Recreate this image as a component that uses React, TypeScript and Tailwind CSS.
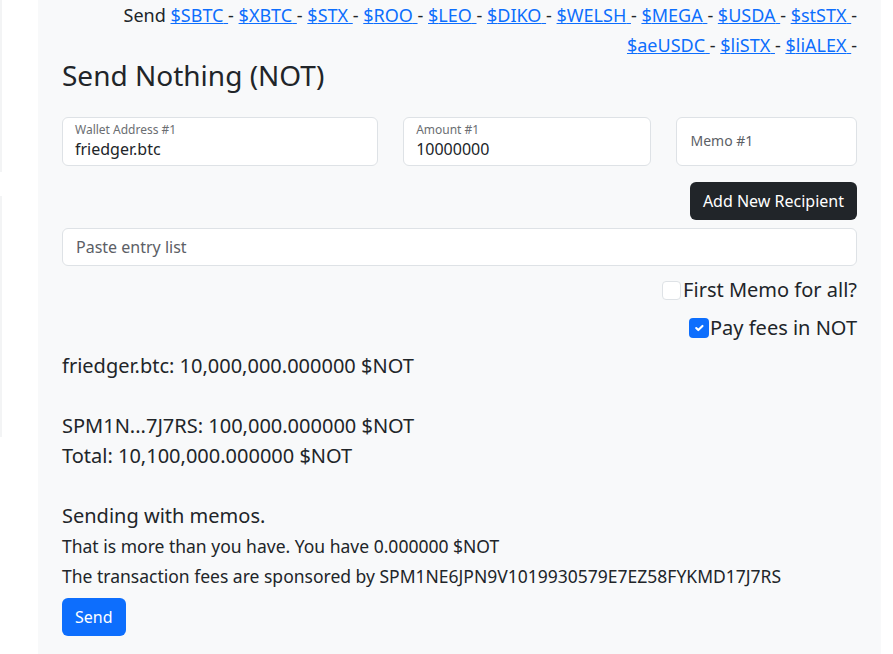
const tokens = ['SBTC', 'XBTC', 'STX', 'ROO', 'LEO', 'DIKO', 'WELSH', 'MEGA', 'USDA', 'stSTX', 'aeUSDC', 'liSTX', 'liALEX'];

function FloatingInput({ label, value, className }: { label: string; value: string; className: string }) {
  return (
    <div className={`h-[49px] rounded-[6px] border border-[#dee2e6] bg-white px-[12px] pt-[4px] ${className}`}>
      <div className="text-[12px] leading-[16px] text-[#6b6e72]">{label}</div>
      <div className="text-[16px] leading-[22px] text-[#212529]">{value}</div>
    </div>
  );
}

export default function App() {
  return (
    <div className="flex h-[654px] w-full bg-white text-[#212529]" style={{ fontFamily: '"Noto Sans", sans-serif' }}>
      {/* left rail */}
      <div className="w-[38px] shrink-0">
        <div className="h-[172px] w-[2px] bg-[#f3f4f5]" />
        <div className="mt-[24px] h-[241px] w-[2px] bg-[#f3f4f5]" />
      </div>

      <main className="w-[843px] shrink-0 bg-[#f8f9fa] px-6">
        <div className="text-right text-[18px] leading-[30px]">
          Send{' '}
          {tokens.map((t) => (
            <span key={t}>
              <a href="#" className="text-[#0d6efd] underline">
                ${t}{' '}
              </a>
              {'- '}
            </span>
          ))}
        </div>

        <h2 className="text-[28px] leading-[30px]">Send Nothing (NOT)</h2>

        <div className="mt-[27px] flex gap-[25px]">
          <FloatingInput label="Wallet Address #1" value="friedger.btc" className="w-[317px]" />
          <FloatingInput label="Amount #1" value="10000000" className="w-[249px]" />
          <div className="flex h-[49px] w-[181px] items-center rounded-[6px] border border-[#dee2e6] bg-white px-[13px] pb-[2px] text-[14px] text-[#5c6066]">
            Memo #1
          </div>
        </div>

        <div className="mt-[16px] flex justify-end">
          <button className="h-[38px] rounded-[6px] bg-[#212529] px-[13px] text-[16px] text-white">Add New Recipient</button>
        </div>

        <div className="mt-[8px] flex h-[38px] items-center rounded-[6px] border border-[#dee2e6] bg-white px-[13px] text-[16px] text-[#5c6066]">
          Paste entry list
        </div>

        <div className="mt-[9px] flex flex-col items-end text-[20px] leading-[30px]">
          <label className="flex items-center">
            <span className="mr-[2px] h-[19px] w-[19px] rounded-[4px] border border-[#dee2e6] bg-white" />
            First Memo for all?
          </label>
          <label className="mt-[8px] flex items-center">
            <span className="mr-[1px] flex h-[20px] w-[20px] items-center justify-center rounded-[4px] bg-[#0d6efd]">
              <svg viewBox="0 0 20 20" className="h-[14px] w-[14px]" fill="none">
                <path d="M6 10l3 3l6-6" stroke="white" strokeWidth="3" strokeLinecap="round" strokeLinejoin="round" />
              </svg>
            </span>
            Pay fees in NOT
          </label>
        </div>

        <div className="mt-[8px] text-[20px] leading-[30px]">
          <div>friedger.btc: 10,000,000.000000 $NOT</div>
          <div className="h-[30px]" />
          <div>SPM1N...7J7RS: 100,000.000000 $NOT</div>
          <div>Total: 10,100,000.000000 $NOT</div>
          <div className="h-[30px]" />
          <div>Sending with memos.</div>
        </div>
        <div className="text-[17.5px] leading-[30px]">
          <div>That is more than you have. You have 0.000000 $NOT</div>
          <div>The transaction fees are sponsored by SPM1NE6JPN9V1019930579E7EZ58FYKMD17J7RS</div>
        </div>

        <button className="mt-[7px] h-[38px] rounded-[6px] bg-[#0d6efd] px-[13px] text-[16px] text-white">Send</button>
      </main>

      <div className="flex-1 bg-white" />
    </div>
  );
}
